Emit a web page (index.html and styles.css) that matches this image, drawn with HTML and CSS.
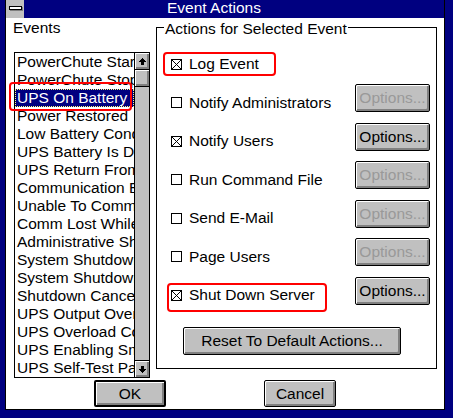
FILE: index.html
```html
<!DOCTYPE html>
<html lang="en">
<head>
    <meta charset="UTF-8" />
    <title>Event Actions</title>
    <link rel="stylesheet" href="styles.css">
</head>
<body>
<div class="window">
    <div class="titlebar">
        <div class="sysmenu"><span class="sysmenu-bar"></span></div>
        <div class="title">Event Actions</div>
    </div>
    <div class="client">
        <div class="main">
            <div class="events">
                <div class="label">Events</div>
                <div class="listbox">
                    <ul class="items">
                        <li>PowerChute Started</li>
                        <li>PowerChute Stopped</li>
                        <li class="selected">UPS On Battery</li>
                        <li>Power Restored</li>
                        <li>Low Battery Condition</li>
                        <li>UPS Battery Is Discharged</li>
                        <li>UPS Return From Low Battery</li>
                        <li>Communication Established</li>
                        <li>Unable To Communicate</li>
                        <li>Comm Lost While On Battery</li>
                        <li>Administrative Shutdown</li>
                        <li>System Shutdown Starting</li>
                        <li>System Shutdown Complete</li>
                        <li>Shutdown Cancelled</li>
                        <li>UPS Output Overload</li>
                        <li>UPS Overload Condition Solved</li>
                        <li>UPS Enabling SmartBoost</li>
                        <li>UPS Self-Test Passed</li>
                    </ul>
                    <div class="scrollbar">
                        <div class="sb-btn sb-up">
                            <svg width="7" height="7" viewBox="0 0 7 7"><path d="M3 0h1v1h1v1h1v1h1v1H5v3H2V4H0V3h1V2h1V1h1z" fill="#000"/></svg>
                        </div>
                        <div class="sb-thumb"></div>
                        <div class="sb-track"></div>
                        <div class="sb-btn sb-down">
                            <svg width="7" height="7" viewBox="0 0 7 7"><path d="M3 7h1V6h1V5h1V4h1V3H5V0H2v3H0v1h1v1h1v1h1z" fill="#000"/></svg>
                        </div>
                    </div>
                </div>
            </div>
            <div class="group">
                <div class="group-title">Actions for Selected Event</div>
                <div class="actions">
                    <div class="row">
                        <div class="check"><svg class="box" width="11" height="11" viewBox="0 0 11 11"><rect x="0.5" y="0.5" width="10" height="10" fill="#fff" stroke="#000"/><path d="M1 1L10 10M10 1L1 10" stroke="#000"/></svg>Log Event</div>
                    </div>
                    <div class="row">
                        <div class="check"><svg class="box" width="11" height="11" viewBox="0 0 11 11"><rect x="0.5" y="0.5" width="10" height="10" fill="#fff" stroke="#000"/></svg>Notify Administrators</div>
                        <button class="btn opt" disabled>Options...</button>
                    </div>
                    <div class="row">
                        <div class="check"><svg class="box" width="11" height="11" viewBox="0 0 11 11"><rect x="0.5" y="0.5" width="10" height="10" fill="#fff" stroke="#000"/><path d="M1 1L10 10M10 1L1 10" stroke="#000"/></svg>Notify Users</div>
                        <button class="btn opt">Options...</button>
                    </div>
                    <div class="row">
                        <div class="check"><svg class="box" width="11" height="11" viewBox="0 0 11 11"><rect x="0.5" y="0.5" width="10" height="10" fill="#fff" stroke="#000"/></svg>Run Command File</div>
                        <button class="btn opt" disabled>Options...</button>
                    </div>
                    <div class="row">
                        <div class="check"><svg class="box" width="11" height="11" viewBox="0 0 11 11"><rect x="0.5" y="0.5" width="10" height="10" fill="#fff" stroke="#000"/></svg>Send E-Mail</div>
                        <button class="btn opt" disabled>Options...</button>
                    </div>
                    <div class="row">
                        <div class="check"><svg class="box" width="11" height="11" viewBox="0 0 11 11"><rect x="0.5" y="0.5" width="10" height="10" fill="#fff" stroke="#000"/></svg>Page Users</div>
                        <button class="btn opt" disabled>Options...</button>
                    </div>
                    <div class="row">
                        <div class="check"><svg class="box" width="11" height="11" viewBox="0 0 11 11"><rect x="0.5" y="0.5" width="10" height="10" fill="#fff" stroke="#000"/><path d="M1 1L10 10M10 1L1 10" stroke="#000"/></svg>Shut Down Server</div>
                        <button class="btn opt">Options...</button>
                    </div>
                </div>
                <button class="btn reset">Reset To Default Actions...</button>
            </div>
        </div>
        <div class="footer">
            <button class="btn default">OK</button>
            <button class="btn">Cancel</button>
        </div>
    </div>
    <!-- red highlight marks -->
    <div class="mark mark-list"></div>
    <div class="mark mark-log"></div>
    <div class="mark mark-shut"></div>
</div>
</body>
</html>
```

FILE: styles.css
```css
* {
    box-sizing: border-box;
}
body {
    margin: 0;
    background: #000080;
    font-family: "Liberation Sans", Arial, sans-serif;
    font-size: 15.5px;
    color: #000;
}
.window {
    position: relative;
    width: 453px;
    height: 418px;
    background: #000080;
    padding: 0 8px 8px 5px;
}
.titlebar {
    display: flex;
    height: 18px;
    border-left: 1px solid #000;
    border-right: 1px solid #000;
}
.sysmenu {
    width: 18px;
    height: 18px;
    background: #c0c0c0;
    display: flex;
    align-items: center;
    justify-content: center;
}
.sysmenu-bar {
    display: block;
    width: 13px;
    height: 4px;
    background: #fff;
    border: 1px solid #000;
    box-shadow: 1px 1px 0 #808080;
    margin-top: -2px;
}
.title {
    flex: 1;
    color: #fff;
    line-height: 15px;
    padding-left: 143px;
}
.client {
    background: #fff;
    height: 392px;
    border: 1px solid #000;
    border-top: none;
}
.main {
    display: flex;
    align-items: flex-start;
}
.events {
    margin-left: 7px;
    padding-top: 1px;
}
.label {
    line-height: 18px;
}
.listbox {
    margin: 15px 0 0 1px;
    width: 136px;
    height: 326px;
    border: 1px solid #000;
    display: flex;
}
.items {
    list-style: none;
    margin: 0;
    padding: 0;
    width: 119px;
    overflow: hidden;
}
.items li {
    height: 18px;
    line-height: 18px;
    padding-left: 2px;
    white-space: nowrap;
    overflow: hidden;
}
.items li.selected {
    background: #000080;
    color: #fff;
    outline: 1px dotted #ffff80;
    outline-offset: -1px;
}
.scrollbar {
    width: 15px;
    border-left: 1px solid #000;
    background: #c0c0c0;
    display: flex;
    flex-direction: column;
}
.sb-btn, .sb-thumb {
    height: 17px;
    display: flex;
    align-items: center;
    justify-content: center;
    box-shadow: inset 1px 1px 0 #fff, inset -2px -2px 0 #808080;
}
.sb-up, .sb-thumb {
    border-bottom: 1px solid #000;
}
.sb-down {
    border-top: 1px solid #000;
}
.sb-track {
    flex: 1;
}
.group {
    margin: 9px 0 0 6px;
    width: 281px;
    height: 342px;
    border: 1px solid #000;
}
.group-title {
    width: max-content;
    margin: -8px 0 0 7px;
    padding: 0 1px;
    background: #fff;
    line-height: 18px;
}
.actions {
    display: grid;
    grid-auto-rows: 38.5px;
    margin-top: 7.5px;
    padding: 0 6px 0 14px;
}
.row {
    display: flex;
    justify-content: space-between;
    align-items: flex-start;
}
.check {
    display: flex;
    align-items: center;
    gap: 7px;
    height: 18px;
    line-height: 18px;
    margin-top: 9.5px;
}
.box {
    display: block;
}
.btn {
    font-family: inherit;
    font-size: 15.5px;
    color: #000;
    background: #c0c0c0;
    border: 1px solid #000;
    border-radius: 2px;
    padding: 0;
    display: flex;
    align-items: center;
    justify-content: center;
    box-shadow: inset 1px 1px 0 #fff, inset -2px -2px 0 #808080;
}
.btn:disabled {
    color: #999;
}
.opt {
    width: 75px;
    height: 28px;
}
.reset {
    width: 218px;
    height: 28px;
    margin: 12px 0 0 26px;
}
.footer {
    display: flex;
    gap: 98px;
    margin-top: 2px;
    padding-left: 88px;
}
.footer .btn {
    width: 72px;
    height: 27px;
}
.footer .default {
    border-width: 2px;
}
.mark {
    position: absolute;
    border: 2px solid #f00;
    border-radius: 4px;
}
.mark-list {
    left: 9px;
    top: 82px;
    width: 123px;
    height: 29px;
}
.mark-log {
    left: 163px;
    top: 52px;
    width: 113px;
    height: 24px;
}
.mark-shut {
    left: 167px;
    top: 283px;
    width: 160px;
    height: 29px;
}
```
